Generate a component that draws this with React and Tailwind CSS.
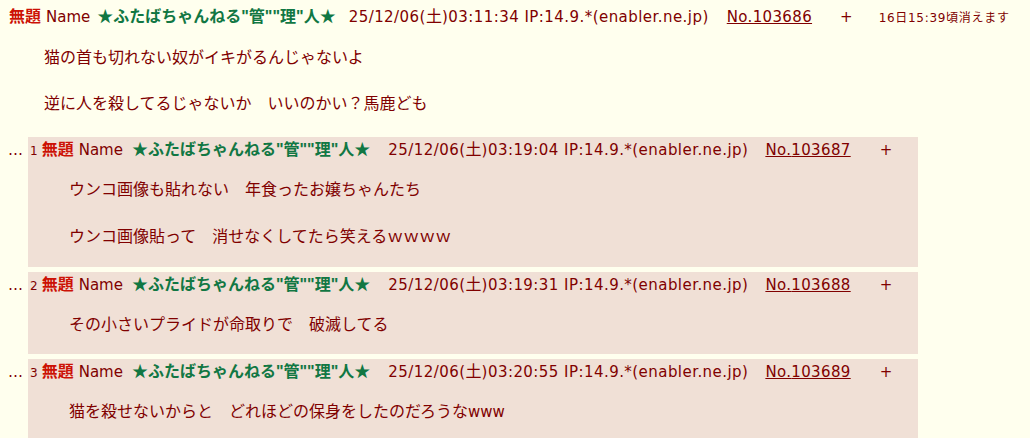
const FONT = "font-['DejaVu_Sans','Noto_Sans_CJK_JP',sans-serif]";
const NAMEF = "font-['Liberation_Sans','Noto_Sans_CJK_JP',sans-serif]";

const replies = [
  { n: 1, time: "03:19:04", no: "103687", lines: ["ウンコ画像も貼れない　年食ったお嬢ちゃんたち", "ウンコ画像貼って　消せなくしてたら笑えるｗｗｗｗ"] },
  { n: 2, time: "03:19:31", no: "103688", lines: ["その小さいプライドが命取りで　破滅してる"] },
  { n: 3, time: "03:20:55", no: "103689", lines: ["猫を殺せないからと　どれほどの保身をしたのだろうな<w>"] },
];

function Line({ text }) {
  if (text.endsWith("<w>")) {
    return (
      <div>
        {text.slice(0, -3)}
        <span className="text-[15px]">www</span>
      </div>
    );
  }
  return <div>{text}</div>;
}

function Body({ lines, lh }) {
  return (
    <div className={lh}>
      {lines.map((l, i) => (
        <div key={i}>
          {i > 0 && <div>&nbsp;</div>}
          <Line text={l} />
        </div>
      ))}
    </div>
  );
}

function DateIp({ time }) {
  return (
    <span className="text-[15px] tracking-[0.45px]">
      25/12/06(<span className="text-[16px] tracking-normal">土</span>){time} IP:14.9.*(enabler.ne.jp)
    </span>
  );
}

export default function App() {
  return (
    <div className={`min-h-screen bg-[#ffffee] text-[#800000] text-[16px] px-[8px] ${FONT}`}>
      <div className="pt-[6px] leading-[22px] whitespace-nowrap">
        <span className="font-bold text-[#cc1105] ml-[1px]">無題</span>
        <span className="ml-[5px] text-[15px]">Name</span>
        <span className={`ml-[7px] font-bold text-[#117743] ${NAMEF}`}>★ふたばちゃんねる"管""理"人★</span>
        <span className="ml-[13px]"><DateIp time="03:11:34" /></span>
        <span className="ml-[18px] underline text-[15px] tracking-[0.35px]">No.103686</span>
        <span className="ml-[28px] text-[15px]">+</span>
        <span className="ml-[26px] text-[12px] tracking-[0.7px]">16日15:39頃消えます</span>
      </div>
      <div className="ml-[36px] mt-[17px] mb-[16px]">
        <Body lh="leading-[23px]" lines={["猫の首も切れない奴がイキがるんじゃないよ", "逆に人を殺してるじゃないか　いいのかい？馬鹿ども"]} />
      </div>
      <div className="flex flex-col gap-[5px] pt-[6px]">
        {replies.map((r) => (
          <div key={r.n} className="flex">
            <div className="w-[20px] pt-[2px] leading-[22px] text-[15px]">…</div>
            <div className="w-[890px] bg-[#f0e0d6] p-[2px]">
              <div className="leading-[22px] whitespace-nowrap">
                <span className="text-[12px]">{r.n}</span>
                <span className="ml-[4px] font-bold text-[#cc1105]">無題</span>
                <span className="ml-[5px] text-[15px]">Name</span>
                <span className={`ml-[9px] font-bold text-[#117743] ${NAMEF}`}>★ふたばちゃんねる"管""理"人★</span>
                <span className="ml-[18px]"><DateIp time={r.time} /></span>
                <span className="ml-[17px] underline text-[15px] tracking-[0.35px]">No.{r.no}</span>
                <span className="ml-[29px] text-[15px]">+</span>
              </div>
              <div className="ml-[39px] mt-[16px] mb-[16px]">
                <Body lh="leading-[23.5px]" lines={r.lines} />
              </div>
            </div>
          </div>
        ))}
      </div>
    </div>
  );
}
